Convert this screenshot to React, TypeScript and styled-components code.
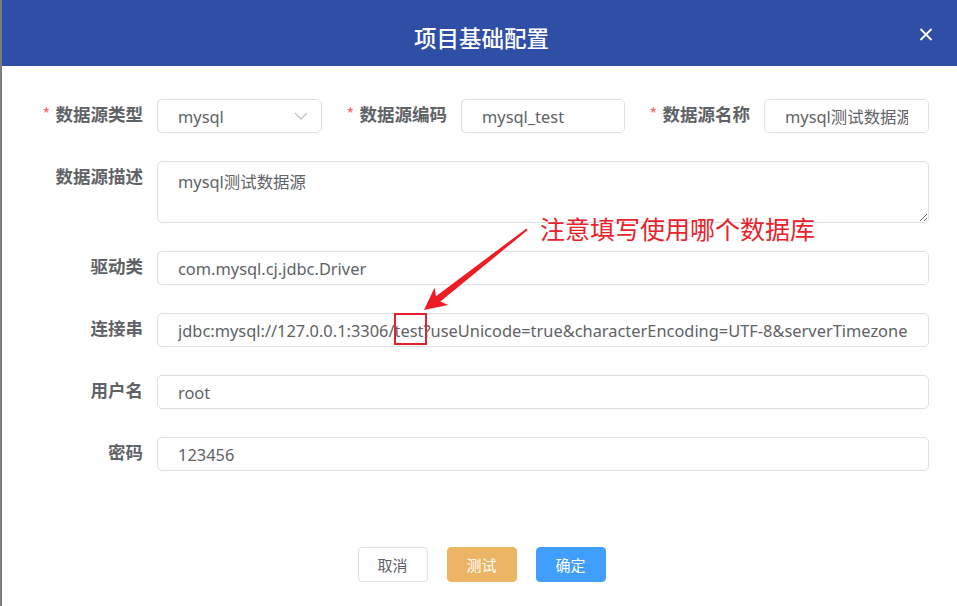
import React from 'react';
import styled, { createGlobalStyle } from 'styled-components';

const GlobalStyle = createGlobalStyle`
  html, body {
    margin: 0;
    padding: 0;
    background: #fff;
  }
  body {
    font-family: "Noto Sans", "Noto Sans CJK SC", sans-serif;
  }
`;

const Page = styled.div`
  position: relative;
  width: 957px;
  height: 606px;
  box-sizing: border-box;
  border-left: 2px solid #7b7b7b;
  background: #fff;
  display: flex;
  flex-direction: column;
  overflow: hidden;
`;

const Header = styled.header`
  height: 66px;
  flex-shrink: 0;
  background: #2f4fa7;
  display: flex;
  align-items: stretch;
`;

const HeaderSide = styled.div`
  width: 62px;
  flex-shrink: 0;
  display: flex;
  align-items: center;
  justify-content: center;
  padding-top: 2px;
  box-sizing: border-box;
`;

const Title = styled.h1`
  flex: 1;
  margin: 0;
  padding: 21px 0 0 4px;
  text-align: center;
  color: #fff;
  font-size: 22.5px;
  line-height: 32px;
  font-weight: 500;
  font-family: "Noto Sans CJK SC", sans-serif;
`;

const Close = styled.button`
  border: none;
  background: transparent;
  padding: 0;
  cursor: pointer;
  display: flex;
`;

const Body = styled.div`
  display: flex;
  flex-direction: column;
  gap: 28px;
  padding: 33px 28px 0 0;
`;

const Row = styled.div`
  display: flex;
  align-items: flex-start;
`;

const Label = styled.label<{ $w: number }>`
  width: ${(p) => p.$w}px;
  flex-shrink: 0;
  box-sizing: border-box;
  padding: 3px 14px 0 0;
  text-align: right;
  line-height: 24px;
  font-size: 17.5px;
  font-weight: 700;
  color: #606266;
  font-family: "Noto Sans CJK SC", sans-serif;
  white-space: nowrap;
`;

const Star = styled.span`
  color: #f56c6c;
  font-weight: 400;
  margin-right: 5px;
`;

const Input = styled.input<{ $w?: number }>`
  box-sizing: border-box;
  height: 34px;
  width: ${(p) => (p.$w ? `${p.$w}px` : 'auto')};
  flex: ${(p) => (p.$w ? '0 0 auto' : '1')};
  min-width: 0;
  border: 1px solid #dcdfe6;
  border-radius: 5px;
  padding: 0 20px;
  font-size: 16.4px;
  color: #606266;
  font-family: "Noto Sans", "Noto Sans CJK SC", sans-serif;
  background: #fff;
  outline: none;
`;

const Select = styled.div`
  box-sizing: border-box;
  width: 165px;
  height: 34px;
  flex-shrink: 0;
  border: 1px solid #dcdfe6;
  border-radius: 5px;
  padding: 0 13px 0 20px;
  display: flex;
  align-items: center;
  justify-content: space-between;
  font-size: 16.4px;
  color: #606266;
`;

const TextArea = styled.textarea`
  box-sizing: border-box;
  flex: 1;
  height: 62px;
  border: 1px solid #dcdfe6;
  border-radius: 5px;
  padding: 8px 20px;
  font-size: 16.4px;
  line-height: 24px;
  color: #606266;
  font-family: "Noto Sans", "Noto Sans CJK SC", sans-serif;
  resize: vertical;
  outline: none;
`;

const Footer = styled.div`
  display: flex;
  justify-content: center;
  gap: 19px;
  padding: 76px 0 0 4px;
`;

const Button = styled.button<{ $kind: 'default' | 'warning' | 'primary' }>`
  box-sizing: border-box;
  width: 70px;
  height: 35px;
  border-radius: 4px;
  font-size: 15px;
  font-family: "Noto Sans CJK SC", sans-serif;
  cursor: pointer;
  border: 1px solid
    ${(p) => (p.$kind === 'default' ? '#dcdfe6' : p.$kind === 'warning' ? '#ebb563' : '#409eff')};
  background: ${(p) => (p.$kind === 'default' ? '#fff' : p.$kind === 'warning' ? '#ebb563' : '#409eff')};
  color: ${(p) => (p.$kind === 'default' ? '#606266' : '#fff')};
`;

const Note = styled.div`
  position: absolute;
  left: 538px;
  top: 213px;
  font-size: 25px;
  line-height: 30px;
  color: #e8232b;
  font-family: "Noto Sans CJK SC", sans-serif;
  white-space: nowrap;
`;

const Arrow = styled.svg`
  position: absolute;
  left: 418px;
  top: 225px;
  width: 112px;
  height: 90px;
  pointer-events: none;
`;

const Mark = styled.div`
  position: absolute;
  left: 392px;
  top: 313px;
  width: 33px;
  height: 32px;
  box-sizing: border-box;
  border: 2px solid #e3202b;
  pointer-events: none;
`;

const connUrl =
  'jdbc:mysql://127.0.0.1:3306/test?useUnicode=true&characterEncoding=UTF-8&serverTimezone=Asia/Shanghai';

export default function App() {
  return (
    <>
      <GlobalStyle />
      <Page>
        <Header>
          <HeaderSide />
          <Title>项目基础配置</Title>
          <HeaderSide>
            <Close aria-label="close">
              <svg width="14" height="13" viewBox="0 0 14 13">
                <path d="M1.5 1 L12.5 12 M12.5 1 L1.5 12" stroke="#fff" strokeWidth="1.8" fill="none" />
              </svg>
            </Close>
          </HeaderSide>
        </Header>

        <Body>
          <Row>
            <Label $w={155}>
              <Star>*</Star>数据源类型
            </Label>
            <Select>
              <span>mysql</span>
              <svg width="14" height="8" viewBox="0 0 14 8">
                <path d="M1 1 L7 7 L13 1" stroke="#c0c4cc" strokeWidth="1.3" fill="none" />
              </svg>
            </Select>
            <Label $w={139}>
              <Star>*</Star>数据源编码
            </Label>
            <Input $w={164} readOnly value="mysql_test" />
            <Label $w={139}>
              <Star>*</Star>数据源名称
            </Label>
            <Input $w={165} readOnly value="mysql测试数据源" />
          </Row>

          <Row>
            <Label $w={155}>数据源描述</Label>
            <TextArea readOnly value="mysql测试数据源" />
          </Row>

          <Row>
            <Label $w={155}>驱动类</Label>
            <Input readOnly value="com.mysql.cj.jdbc.Driver" />
          </Row>

          <Row>
            <Label $w={155}>连接串</Label>
            <Input readOnly value={connUrl} />
          </Row>

          <Row>
            <Label $w={155}>用户名</Label>
            <Input readOnly value="root" />
          </Row>

          <Row>
            <Label $w={155}>密码</Label>
            <Input readOnly value="123456" />
          </Row>
        </Body>

        <Footer>
          <Button $kind="default">取消</Button>
          <Button $kind="warning">测试</Button>
          <Button $kind="primary">确定</Button>
        </Footer>

        <Note>注意填写使用哪个数据库</Note>
        <Arrow viewBox="420 225 112 90">
          <polygon
            points="424,310 434.5,287.7 436,296.2 526.5,228.4 527.7,230 440.4,301.6 448.1,305.1"
            fill="#ee1c25"
          />
        </Arrow>
        <Mark />
      </Page>
    </>
  );
}
